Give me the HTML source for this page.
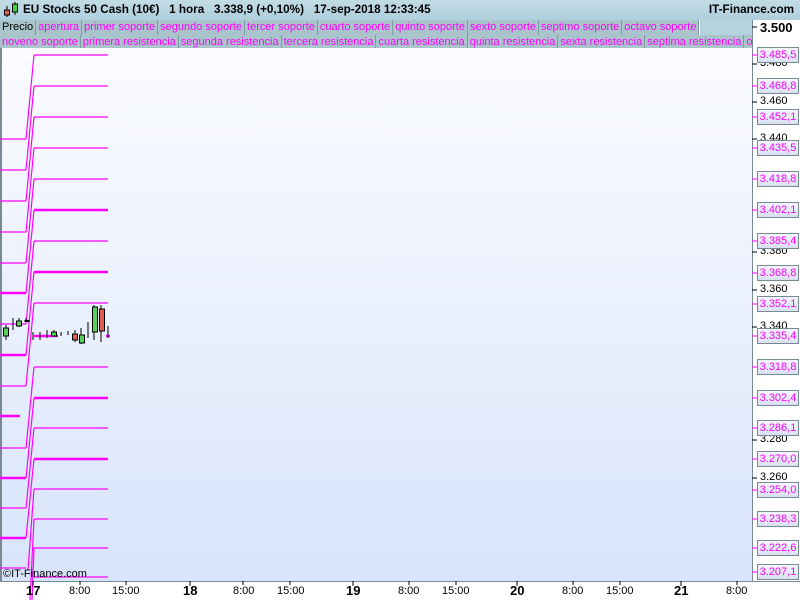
<!DOCTYPE html>
<html><head><meta charset="utf-8"><style>
*{margin:0;padding:0;box-sizing:border-box}
body{width:800px;height:600px;overflow:hidden;background:#b5d3df;font-family:"Liberation Sans",sans-serif;position:relative}
.top{position:absolute;left:0;top:0;width:800px;height:20px;background:linear-gradient(#c3dce6,#aecfdc);font-weight:bold;font-size:11.7px;color:#000}
.row{position:absolute;left:0;height:16px;white-space:nowrap;font-size:11px;overflow:hidden}
.row span{display:inline-block;height:16px;line-height:15px;padding:0 2px;color:#ff00ff;background:#aac4cc;border-right:1px solid #7f9aa4;border-bottom:1px solid #7f9aa4}
.row span.k{color:#000}
.lab{position:absolute;left:757px;width:42px;height:16px;border:1px solid #7a8a94;background:linear-gradient(#f4f6ff,#d8e0f0);color:#ff00ff;font-size:11px;line-height:14px;text-align:center;padding:0;white-space:nowrap;overflow:hidden}
.bl{position:absolute;left:760px;font-size:11px;color:#000}
.xl{position:absolute;top:585px;font-size:11px;color:#000}
.xb{position:absolute;top:583px;font-size:13px;font-weight:bold}
</style></head><body>
<div class="top">
<svg style="position:absolute;left:3px;top:2px" width="16" height="16"><line x1="4" y1="4" x2="4" y2="15" stroke="#000"/><rect x="1.5" y="8" width="5" height="5" fill="#e06050" stroke="#000"/><line x1="12" y1="0" x2="12" y2="13" stroke="#000"/><rect x="9.5" y="2" width="5" height="8" fill="#40d040" stroke="#000"/></svg>
<span style="position:absolute;left:23px;top:3px">EU Stocks 50 Cash (10€)&nbsp;&nbsp;&nbsp;1 hora&nbsp;&nbsp;&nbsp;3.338,9 (+0,10%)&nbsp;&nbsp;&nbsp;17-sep-2018 12:33:45</span>
<span style="position:absolute;right:6px;top:3px">IT-Finance.com</span>
</div>
<div class="row" style="top:20px;width:700px;background:#fff"><span class="k">Precio</span><span>apertura</span><span>primer soporte</span><span>segundo soporte</span><span>tercer soporte</span><span>cuarto soporte</span><span>quinto soporte</span><span>sexto soporte</span><span>septimo soporte</span><span>octavo soporte</span></div>
<div class="row" style="top:35px;width:752px"><span>noveno soporte</span><span>primera resistencia</span><span>segunda resistencia</span><span>tercera resistencia</span><span>cuarta resistencia</span><span>quinta resistencia</span><span>sexta resistencia</span><span>septima resistencia</span><span>o</span></div>
<div style="position:absolute;left:752px;top:20px;width:48px;height:561px;background:#fff;border-left:1px solid #7a8a94"></div>
<div style="position:absolute;left:0;top:48px;width:752px;height:533px;background:linear-gradient(#fbfcff,#d8e4fb);border-left:2px solid #7a8a94"></div>
<div style="position:absolute;left:0;top:581px;width:800px;height:19px;background:#fff;border-top:1px solid #7a8a94"></div>
<svg style="position:absolute;left:0;top:0" width="800" height="600">
<g stroke="#ff00ff" fill="none" stroke-width="1.2">
<path d="M34 55H108M34 86H108M34 117H108M34 148H108M34 179H108M34 241H108M34 303H108M34 367H108M34 428H108M34 489H108M34 519H108M34 548H108M34 577H108"/>
<path d="M0 139H26M0 170H26M0 201H26M0 232H26M0 263H26M0 324H26M0 386H26M0 448H26M0 508H26M0 568H26"/>
<path d="M26 139L34 55M26 170L34 86M26 201L34 117M26 232L34 148M26 263L34 179M26 293L34 210M26 324L34 241M26 355L34 272M26 386L34 303M26 448L34 367M26 478L34 398M26 508L34 428M26 538L34 459M28 570L34 489M30 600L34 519M32 600L34 548"/>
</g>
<g stroke="#ff00ff" fill="none" stroke-width="2.5">
<path d="M34 210H108M34 272H108M34 398H108M34 459H108M0 293H26M0 355H26M0 416H20M0 478H26M0 538H26M34 336H58M106 336H110"/>
</g>
<g stroke="#000" stroke-width="1">
<path d="M6 325V340M13 318V330M19 318V327M26 318V322M33 332V340M40 332V340M47 330V338M54 330V337M61 332V336M68 331V335M75 330V342M81 328V344M88 322V338M94 305V340M101 305V342M108 326V338"/>
</g>
<rect x="3.5" y="328" width="5" height="8" fill="#5cd05c" stroke="#000"/>
<rect x="16.5" y="321" width="5" height="5" fill="#5cd05c" stroke="#000"/>
<rect x="24.5" y="320" width="5" height="2" fill="#000"/>
<rect x="51.5" y="332" width="5" height="4" fill="#5cd05c" stroke="#000"/>
<rect x="72.5" y="334" width="5" height="6" fill="#e06050" stroke="#000"/>
<rect x="79.5" y="335" width="5" height="8" fill="#5cd05c" stroke="#000"/>
<rect x="92.5" y="307" width="5" height="25" fill="#5cd05c" stroke="#000"/>
<rect x="99.5" y="309" width="5" height="22" fill="#e06050" stroke="#000"/>
<g stroke="#000"><path d="M752 27h5M752 64h5M752 102h5M752 139h5M752 252h5M752 290h5M752 327h5M752 440h5M752 478h5"/></g>
<g stroke="#ff00ff"><path d="M752 55h5M752 86h5M752 117h5M752 148h5M752 179h5M752 210h5M752 241h5M752 273h5M752 304h5M752 336h5M752 367h5M752 398h5M752 428h5M752 459h5M752 490h5M752 519h5M752 548h5M752 572h5"/></g>
<g stroke="#000"><path d="M33 581v5M80 581v4M126 581v4M190 581v5M243 581v4M290 581v4M353 581v5M409 581v4M456 581v4M517 581v5M573 581v4M620 581v4M681 581v5M737 581v4"/></g>
</svg>
<div class="bl" style="top:20px;font-weight:bold;font-size:13px">3.500</div>
<div class="bl" style="top:57px">3.480</div>
<div class="bl" style="top:95px">3.460</div>
<div class="bl" style="top:132px">3.440</div>
<div class="bl" style="top:245px">3.380</div>
<div class="bl" style="top:283px">3.360</div>
<div class="bl" style="top:320px">3.340</div>
<div class="bl" style="top:433px">3.280</div>
<div class="bl" style="top:471px">3.260</div>
<div class="lab" style="top:47px">3.485,5</div>
<div class="lab" style="top:78px">3.468,8</div>
<div class="lab" style="top:109px">3.452,1</div>
<div class="lab" style="top:140px">3.435,5</div>
<div class="lab" style="top:171px">3.418,8</div>
<div class="lab" style="top:202px">3.402,1</div>
<div class="lab" style="top:233px">3.385,4</div>
<div class="lab" style="top:265px">3.368,8</div>
<div class="lab" style="top:296px">3.352,1</div>
<div class="lab" style="top:328px">3.335,4</div>
<div class="lab" style="top:359px">3.318,8</div>
<div class="lab" style="top:390px">3.302,4</div>
<div class="lab" style="top:420px">3.286,1</div>
<div class="lab" style="top:451px">3.270,0</div>
<div class="lab" style="top:482px">3.254,0</div>
<div class="lab" style="top:511px">3.238,3</div>
<div class="lab" style="top:540px">3.222,6</div>
<div class="lab" style="top:564px">3.207,1</div>
<div style="position:absolute;left:3px;top:568px;font-size:11px">©IT-Finance.com</div>
<div class="xb" style="left:26px">17</div>
<div class="xl" style="left:69px">8:00</div>
<div class="xl" style="left:112px">15:00</div>
<div class="xb" style="left:183px">18</div>
<div class="xl" style="left:233px">8:00</div>
<div class="xl" style="left:277px">15:00</div>
<div class="xb" style="left:346px">19</div>
<div class="xl" style="left:398px">8:00</div>
<div class="xl" style="left:442px">15:00</div>
<div class="xb" style="left:510px">20</div>
<div class="xl" style="left:562px">8:00</div>
<div class="xl" style="left:606px">15:00</div>
<div class="xb" style="left:674px">21</div>
<div class="xl" style="left:726px">8:00</div>
</body></html>
